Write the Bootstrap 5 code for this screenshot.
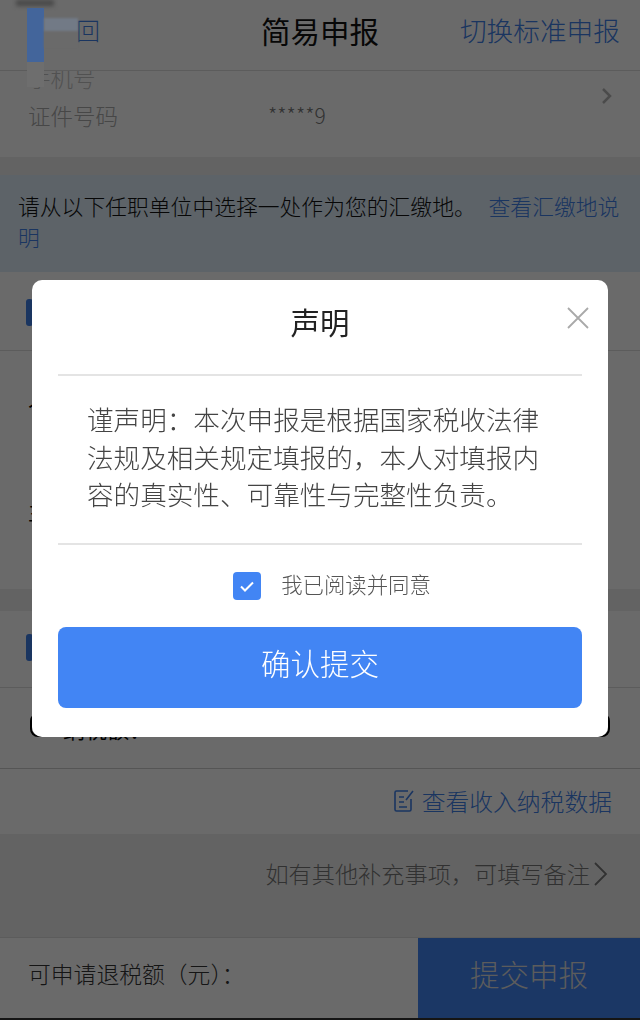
<!DOCTYPE html>
<html lang="zh-CN">
<head>
<meta charset="utf-8">
<title>简易申报</title>
<link href="https://cdn.jsdelivr.net/npm/bootstrap@5.3.0/dist/css/bootstrap.min.css" rel="stylesheet">
<style>
html,body{height:1020px;overflow:hidden;}
body{font-family:"Noto Sans CJK SC","Liberation Sans",sans-serif;background:#fff;color:#222;font-weight:300;}
.page-shell{height:1020px;overflow:hidden;}
.top-bar{height:71px;border-bottom:1px solid #ddd;background:#fff;position:relative;z-index:1;padding-bottom:10px;}
.top-title{font-size:29.5px;color:#111;font-weight:400;}
.top-link{font-size:26.7px;color:#3f7fe8;right:20px;}
.back-link{font-size:24px;color:#3f7fe8;left:52px;}
.info-block{height:86px;padding:0 28px;background:#fff;font-size:22.5px;color:#aaa;display:flow-root;}
.info-first{margin-top:-9px;line-height:30px;color:#c4c4c4;}
.info-second{line-height:30px;margin-top:8px;}
.info-value{font-size:21px;color:#777;margin-left:150px;}
.info-arrow{right:27px;top:87px;}
.gap-strip{height:18px;background:#efefef;}
.notice-block{height:97px;background:#dfeefb;padding:16px 18px 0;font-size:21.8px;line-height:30.5px;color:#111;}
.notice-block a{color:#3f7fe8;text-decoration:none;margin-left:8px;}
.form-section{background:#fff;}
.sec-head{height:79px;padding-top:27px;border-bottom:1px solid #ddd;}
.sec-mark{width:7px;height:27px;margin-left:26px;background:#3f7fe8;border-radius:3px;}
.sec-one{height:238px;padding-left:28px;font-size:22px;color:#000;font-weight:400;}
.sec-one p{margin:0;line-height:30px;}
.sec-one .first-line{padding-top:40px;}
.sec-one .second-line{padding-top:74px;}
.gap-wide{height:22px;background:#efefef;}
.sec-head-two{height:77px;padding-top:23px;}
.sec-row{height:81px;padding:25px 0 0 30px;border-bottom:1px solid #ccc;}
.ink-box{width:580px;height:24px;border:2px solid #000;border-radius:8px;}
.ink-text{font-size:22px;line-height:26px;color:#000;padding-left:31px;font-weight:400;}
.data-row{height:65px;padding:0 28px 2px 0;font-size:23.8px;color:#3f7fe8;}
.remark-block{height:103px;background:#efefef;padding:0 32px 24px 0;font-size:23.2px;color:#777;}
.foot-bar{height:83px;background:#fff;border-top:1px solid #ddd;border-bottom:2px solid #333;}
.foot-label{padding:0 0 8px 28px;font-size:22.8px;color:#333;}
.foot-btn{width:222px;border:0;border-radius:0;background:#4285f4;color:#ddd;font-size:29.5px;font-weight:300;padding-bottom:16px;}
.smear-shadow,.smear-blue,.smear-grey,.smear-pale{position:absolute;z-index:1052;}
.smear-shadow{left:16px;top:0;width:38px;height:6px;background:#484848;filter:blur(2px);}
.smear-blue{left:27px;top:8px;width:17px;height:54px;background:#43659b;}
.smear-grey{left:27px;top:62px;width:17px;height:25px;background:#6e6e6e;}
.smear-pale{left:44px;top:18px;width:34px;height:30px;background:linear-gradient(#727a86 45%,#6a6a6a 45%);filter:blur(1px);}
.modal-backdrop.show{opacity:.585;}
.app-modal{--bs-modal-margin:0px;--bs-modal-width:576px;}
.app-modal .modal-dialog{padding-bottom:3px;}
.app-modal .modal-content{height:457px;border:0;border-radius:10px;padding:0 26px;}
.sheet-head{height:96px;border-bottom:2px solid #e4e4e4;font-size:29.5px;color:#222;padding-bottom:12px;font-weight:400;}
.sheet-close{right:-7px;top:27px;line-height:0;}
.sheet-body{height:169px;padding:24px 27px 0 29px;font-size:26.6px;line-height:37.6px;color:#444;border-bottom:2px solid #e4e4e4;}
.agree-row{height:82px;padding:0 0 3px 24px;}
.agree-box{width:28px;height:28px;background:#4285f4;border-radius:4px;margin-top:3px;}
.agree-text{font-size:21.4px;color:#555;margin-left:20px;}
.confirm-btn{height:81px;width:100%;background:#4285f4;border:0;border-radius:8px;color:#fff;font-size:29.5px;font-weight:300;padding-bottom:16px;}
</style>
</head>
<body>
<div class="page-shell">
  <header class="top-bar d-flex align-items-center justify-content-center">
    <span class="back-link position-absolute">返回</span>
    <span class="top-title">简易申报</span>
    <span class="top-link position-absolute">切换标准申报</span>
  </header>
  <section class="info-block position-relative">
    <div class="info-first">手机号</div>
    <div class="info-second d-flex align-items-center">证件号码<span class="info-value">*****9</span></div>
  </section>
  <svg class="position-absolute info-arrow" width="12" height="18" viewBox="0 0 12 18" fill="none" stroke="#b5b5b5" stroke-width="2.5"><path d="M2 2l7 7-7 7"/></svg>
  <div class="gap-strip"></div>
  <div class="notice-block">请从以下任职单位中选择一处作为您的汇缴地。 <a href="#">查看汇缴地说明</a></div>
  <section class="form-section">
    <div class="sec-head"><div class="sec-mark"></div></div>
    <div class="sec-one">
      <p class="first-line">个人</p>
      <p class="second-line">主管</p>
    </div>
  </section>
  <div class="gap-wide"></div>
  <section class="form-section">
    <div class="sec-head sec-head-two"><div class="sec-mark"></div></div>
    <div class="sec-row"><div class="ink-box"><div class="ink-text">纳税额&#xFF1A;</div></div></div>
    <div class="data-row d-flex align-items-center justify-content-end gap-2">
      <svg width="20" height="22" viewBox="0 0 20 22" fill="none" stroke="#3f7fe8" stroke-width="1.6"><path d="M14 1H2.500A1.500 1.500 0 0 0 1 2.500V19.500A1.500 1.500 0 0 0 2.500 21h13A1.500 1.500 0 0 0 17 19.500V9M5 7h5M5 12h5M5 17h8M19 1l-7 9"/></svg>
      <span>查看收入纳税数据</span>
    </div>
  </section>
  <div class="remark-block d-flex align-items-center justify-content-end gap-1">
    <span>如有其他补充事项&#xFF0C;可填写备注</span>
    <svg width="14" height="24" viewBox="0 0 14 24" fill="none" stroke="#777" stroke-width="1.8"><path d="M1 1l11 11L1 23"/></svg>
  </div>
  <footer class="foot-bar d-flex">
    <div class="foot-label flex-grow-1 d-flex align-items-center">可申请退税额&#xFF08;元&#xFF09;&#xFF1A;</div>
    <button type="button" class="btn foot-btn">提交申报</button>
  </footer>
</div>

<div class="modal-backdrop show"></div>
<div class="smear-shadow"></div><div class="smear-blue"></div><div class="smear-grey"></div><div class="smear-pale"></div>

<div class="modal app-modal d-block" tabindex="-1">
  <div class="modal-dialog modal-dialog-centered">
    <div class="modal-content">
      <div class="sheet-head position-relative d-flex align-items-center justify-content-center">
        <span>声明</span>
        <span class="sheet-close position-absolute">
          <svg width="22" height="22" viewBox="0 0 22 22" fill="none" stroke="#a9a9a9" stroke-width="1.8"><path d="M1 1l20 20M21 1L1 21"/></svg>
        </span>
      </div>
      <div class="sheet-body">谨声明&#xFF1A;本次申报是根据国家税收法律法规及相关规定填报的&#xFF0C;本人对填报内容的真实性、可靠性与完整性负责。</div>
      <div class="agree-row d-flex align-items-center justify-content-center">
        <span class="agree-box d-flex align-items-center justify-content-center">
          <svg width="14" height="11" viewBox="0 0 14 11" fill="none" stroke="#fff" stroke-width="2"><path d="M1 5.500l4 4 8-8"/></svg>
        </span>
        <span class="agree-text">我已阅读并同意</span>
      </div>
      <button type="button" class="btn confirm-btn">确认提交</button>
    </div>
  </div>
</div>
<script src="https://cdn.jsdelivr.net/npm/bootstrap@5.3.0/dist/js/bootstrap.bundle.min.js"></script>
</body>
</html>
